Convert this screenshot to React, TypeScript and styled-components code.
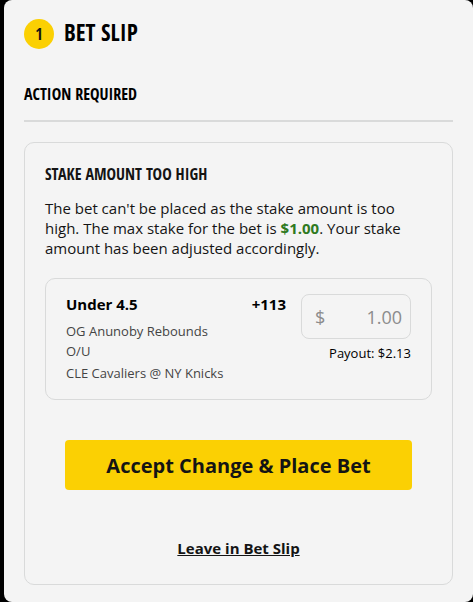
import React from "react";
import styled, { createGlobalStyle } from "styled-components";

const display = `"Saira Semi Condensed", "Open Sans Condensed", "Roboto Condensed", "Liberation Sans Narrow", "Liberation Sans", sans-serif`;
const line = "#d9dada";

const GlobalStyle = createGlobalStyle`
  *, *::before, *::after { box-sizing: border-box; }
  body { margin: 0; background: #000; color: #141414; font-family: "Open Sans", sans-serif; font-size: 15px; line-height: 20px; }
  h1, h2, h3, p { margin: 0; }
  button, input { font: inherit; color: inherit; }
`;

const Panel = styled.main`
  min-height: 100vh;
  margin-left: 4px;
  padding: 19px 20px 16px;
  border-radius: 8px;
  background: #f4f4f4;
`;

const Header = styled.header`
  display: flex;
  align-items: flex-start;
  gap: 10px;
`;

const Count = styled.span`
  display: flex;
  align-items: center;
  justify-content: center;
  width: 30px;
  height: 30px;
  border-radius: 50%;
  background: #fbd003;
  color: #141414;
  font: 700 16px/20px ${display};
`;

const Title = styled.h1`
  color: #000;
  font: 700 23px/26px ${display};
`;

const SectionTitle = styled.h2`
  margin: 35px 0 20px;
  padding-bottom: 16px;
  border-bottom: 2px solid ${line};
  color: #000;
  font: 700 16px/20px ${display};
`;

const Card = styled.section`
  padding: 21px 20px 26px;
  border: 1px solid ${line};
  border-radius: 10px;
`;

const CardTitle = styled.h3`
  margin-bottom: 14px;
  font: 700 16px/20px ${display};
`;

const Amount = styled.strong`
  color: #2f7a1f;
  font-weight: 700;
`;

const Bet = styled.article`
  display: grid;
  grid-template-columns: minmax(0, 1fr) 45px 110px;
  column-gap: 15px;
  margin-top: 20px;
  padding: 15px 20px 16px;
  border: 1px solid ${line};
  border-radius: 10px;
`;

const Pick = styled.p<{ $end?: boolean }>`
  color: #000;
  font-weight: 700;
  text-align: ${(p) => (p.$end ? "right" : "left")};
`;

const Detail = styled.p<{ $gap: number }>`
  margin-top: ${(p) => p.$gap}px;
  color: #444;
  font-size: 13px;
`;

const StakeBox = styled.label`
  display: flex;
  align-items: center;
  height: 45px;
  padding: 0 8px 0 13px;
  border: 1px solid ${line};
  border-radius: 8px;
  color: #8c8c8c;
  font-size: 18px;
`;

const StakeInput = styled.input`
  flex: 1;
  min-width: 0;
  padding: 0;
  border: 0;
  outline: 0;
  background: transparent;
  text-align: right;
`;

const Payout = styled.p`
  margin-top: 4px;
  color: #000;
  font-size: 13px;
  text-align: right;
`;

const Actions = styled.div`
  display: flex;
  flex-direction: column;
  align-items: center;
  gap: 48px;
  padding: 40px 20px 0;
`;

const Accept = styled.button`
  width: 100%;
  height: 50px;
  padding: 2px 0 0;
  border: 0;
  border-radius: 4px;
  background: #fbd003;
  color: #141414;
  font-size: 20px;
  font-weight: 700;
  cursor: pointer;
`;

const Leave = styled.a`
  color: #141414;
  font-weight: 700;
  text-decoration: underline;
`;

export default function App() {
  return (
    <>
      <GlobalStyle />
      <Panel>
        <Header>
          <Count>1</Count>
          <Title>BET SLIP</Title>
        </Header>
        <SectionTitle>ACTION REQUIRED</SectionTitle>
        <Card>
          <CardTitle>STAKE AMOUNT TOO HIGH</CardTitle>
          <p>
            The bet can't be placed as the stake amount is too high. The max stake for the bet is{" "}
            <Amount>$1.00</Amount>. Your stake amount has been adjusted accordingly.
          </p>
          <Bet>
            <div>
              <Pick>Under 4.5</Pick>
              <Detail $gap={7}>OG Anunoby Rebounds O/U</Detail>
              <Detail $gap={2}>CLE Cavaliers @ NY Knicks</Detail>
            </div>
            <Pick $end>+113</Pick>
            <div>
              <StakeBox htmlFor="stake">
                <span>$</span>
                <StakeInput id="stake" aria-label="Stake amount" inputMode="decimal" defaultValue="1.00" />
              </StakeBox>
              <Payout>Payout: $2.13</Payout>
            </div>
          </Bet>
          <Actions>
            <Accept type="button">Accept Change &amp; Place Bet</Accept>
            <Leave href="#bet-slip">Leave in Bet Slip</Leave>
          </Actions>
        </Card>
      </Panel>
    </>
  );
}
